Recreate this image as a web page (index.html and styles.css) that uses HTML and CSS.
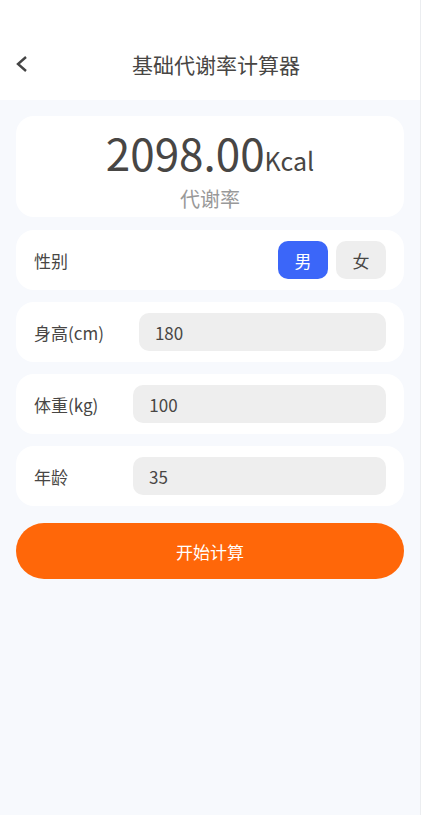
FILE: index.html
```html
<!DOCTYPE html>
<html lang="zh-CN">
<head>
  <meta charset="UTF-8" />
  <meta name="viewport" content="width=device-width, initial-scale=1.0"/>
  <title>基础代谢率计算器</title>
  <link rel="stylesheet" href="styles.css">
</head>
<body>
  <header>
    <button class="back" aria-label="返回" onclick="history.back()">
      <svg width="12" height="18" viewBox="0 0 12 18" fill="none" stroke="#444" stroke-width="2.4">
        <path d="M10 2 L2 9 L10 16" />
      </svg>
    </button>
    <h1>基础代谢率计算器</h1>
  </header>
  <main>
    <div class="card result">
      <div class="value"><span id="bmr">2098.00</span><span class="unit">Kcal</span></div>
      <div class="caption">代谢率</div>
    </div>

    <form id="form">
      <div class="card row">
        <span id="gender-label">性别</span>
        <div class="gender" role="group" aria-labelledby="gender-label">
          <button type="button" class="option active" data-sex="male">男</button>
          <button type="button" class="option" data-sex="female">女</button>
        </div>
      </div>
      <div class="card row">
        <label for="height">身高(cm)</label>
        <input id="height" inputmode="decimal" value="180" />
      </div>
      <div class="card row">
        <label for="weight">体重(kg)</label>
        <input id="weight" inputmode="decimal" value="100" />
      </div>
      <div class="card row">
        <label for="age">年龄</label>
        <input id="age" inputmode="numeric" value="35" />
      </div>
      <button class="submit">开始计算</button>
    </form>
  </main>

  <script>
    let sex = 'male';
    const options = document.querySelectorAll('.option');

    options.forEach((option) => {
      option.onclick = () => {
        sex = option.dataset.sex;
        options.forEach((o) => o.classList.toggle('active', o === option));
      };
    });

    document.getElementById('form').onsubmit = (event) => {
      event.preventDefault();
      const h = parseFloat(document.getElementById('height').value);
      const w = parseFloat(document.getElementById('weight').value);
      const a = parseFloat(document.getElementById('age').value);
      if (!h || !w || !a) return;

      const bmr = sex === 'male'
        ? 66 + 13.7 * w + 5 * h - 6.8 * a
        : 655 + 9.6 * w + 1.8 * h - 4.7 * a;
      document.getElementById('bmr').innerText = bmr.toFixed(2);
    };
  </script>
</body>
</html>
```
FILE: styles.css
```css
* {
  box-sizing: border-box;
}
body {
  margin: 0;
  min-height: 100vh;
  font-family: "Noto Sans CJK SC", sans-serif;
  font-size: 17px;
  color: #484644;
  background-color: #f7f9fd;
  border-right: 1px solid #ebedf0;
}
button, input {
  font: inherit;
  color: inherit;
  border: none;
}
button {
  padding: 0;
  cursor: pointer;
}
header {
  display: flex;
  align-items: center;
  padding: 28px 16px 0;
  height: 100px;
  background-color: white;
}
h1 {
  flex: 1;
  margin: 0;
  font-size: 21px;
  font-weight: normal;
  text-align: center;
}
.back {
  display: flex;
  background: none;
}
main {
  padding: 16px;
}
.card {
  background-color: white;
  border-radius: 18px;
}
.result {
  padding: 8px 18px 3px;
  margin-bottom: 13px;
  text-align: center;
}
.value {
  font-size: 44px;
  line-height: 56px;
}
.unit {
  font-size: 25px;
  line-height: 1;
}
.caption {
  margin-top: 4px;
  font-size: 20px;
  line-height: 30px;
  color: #999;
}
.row {
  display: flex;
  align-items: center;
  justify-content: space-between;
  gap: 35px;
  height: 60px;
  padding: 0 18px;
  margin-bottom: 12px;
}
.row label {
  flex: none;
}
.row input {
  flex: 0 1 253px;
  min-width: 0;
  height: 38px;
  padding: 0 16px;
  background-color: #eee;
  border-radius: 10px;
}
.gender {
  display: flex;
  gap: 8px;
}
.option {
  width: 50px;
  height: 38px;
  background-color: #eee;
  border-radius: 10px;
}
.option.active {
  background-color: #3b66f9;
  color: white;
}
.submit {
  display: block;
  width: 100%;
  height: 56px;
  margin-top: 17px;
  background-color: #ff6709;
  color: white;
  border-radius: 28px;
}
```
